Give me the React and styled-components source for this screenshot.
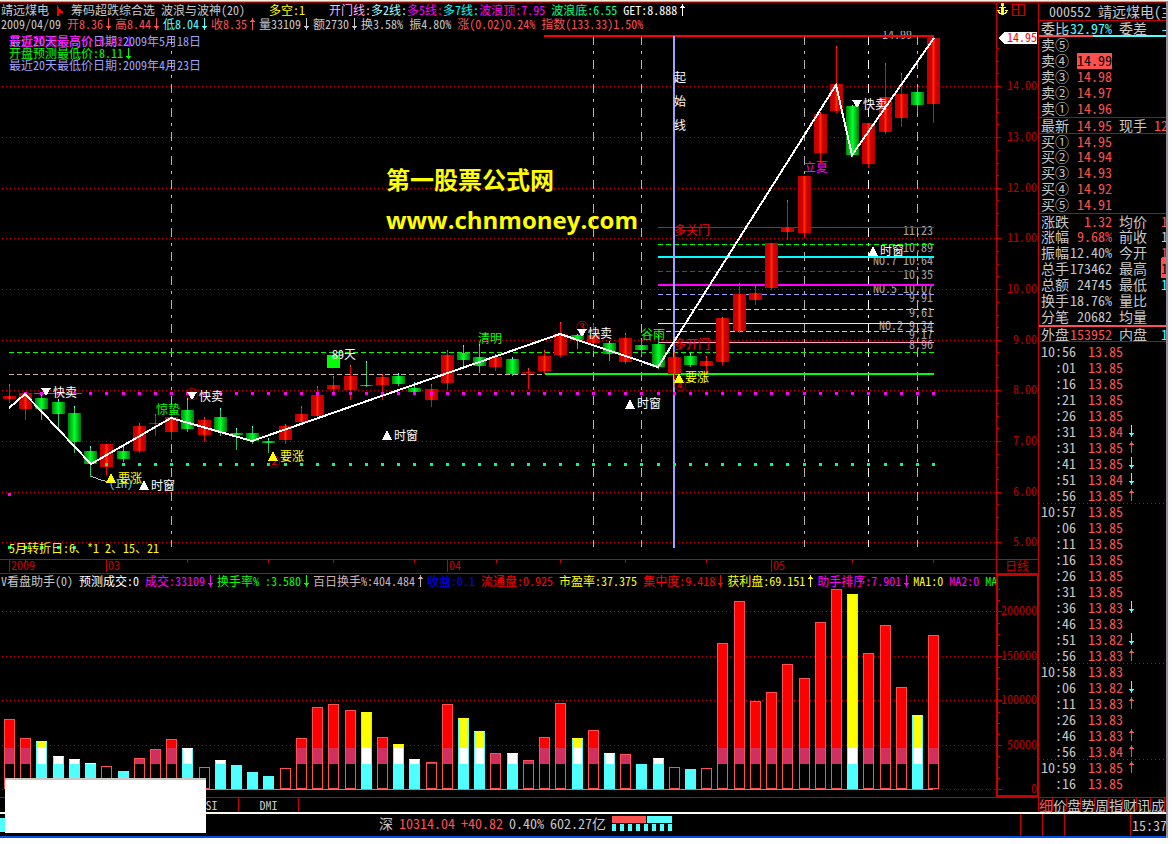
import React from "react";
import styled, { createGlobalStyle, css } from "styled-components";

const GlobalStyle = createGlobalStyle`
  * {
    box-sizing: border-box;
  }
  body {
    margin: 0;
    background: #fdfdff;
    color: #c8c8c8;
    font-family: "Noto Sans CJK SC", "Liberation Mono", monospace;
    font-size: 12px;
    line-height: 14px;
    /* half-width latin, so that two digits fill one chinese cell */
    font-feature-settings: "hwid" 1;
  }
`;

const RED = "#ff5050";
const CYAN = "#50ffff";
const LINE = "#c80000";

const titleItems = [
  ["波浪与波神(20)    ", "#c8c8c8"],
  ["多空:1    ", "#ffff00"],
  ["开门线:", "#ffb0ff"],
  ["多2线:", "#a0ffff"],
  ["多5线:", "#ff00ff"],
  ["多7线:", "#00ffff"],
  ["波浪顶:7.95 ", "#ff00ff"],
  ["波浪底:6.55 ", "#00ff80"],
  ["GET:8.888", "#ffffff", "up"],
];

const dayItems = [
  ["2009/04/09 ", "#c8c8c8"],
  ["开8.36", RED, "down"],
  ["高8.44", RED, "down"],
  ["低8.04", CYAN, "down"],
  ["收8.35", RED, "up"],
  ["量33109", "#c8c8c8", "down"],
  ["额2730", "#c8c8c8", "down"],
  ["换3.58% ", "#c8c8c8"],
  ["振4.80% ", "#c8c8c8"],
  ["涨(0.02)0.24% ", RED],
  ["指数(133.33)1.50%", RED],
];

const volumeItems = [
  ["V看盘助手(0) ", "#c8c8c8"],
  ["预测成交:0 ", "#ffffff"],
  ["成交:33109", "#ff00ff", "down"],
  ["换手率% :3.580", "#00ff00", "down"],
  ["百日换手%:404.484", "#d0b0b8", "up"],
  ["收益:0.1 ", "#0000ff"],
  ["流通盘:0.925 ", "#ff0000"],
  ["市盈率:37.375 ", "#ffff00"],
  ["集中度:9.418", "#ff0000", "down"],
  ["获利盘:69.151", "#ffff00", "up"],
  ["助手排序:7.901", "#ff00ff", "down"],
  ["MA1:0 ", "#ffff00"],
  ["MA2:0 ", "#ff00ff"],
  ["MA", "#00ff00"],
];

// [direction, high, top, bottom, low]
const candles = [
  ["r", 384, 396, 399, 402],
  ["r", 392, 393, 409, 419],
  ["g", 394, 398, 409, 419],
  ["g", 399, 402, 414, 427],
  ["g", 406, 413, 442, 452],
  ["g", 446, 451, 464, 476],
  ["r", 444, 444, 467, 474],
  ["g", 446, 451, 459, 461],
  ["r", 423, 426, 451, 452],
  ["r", 414, 423, 424, 435],
  ["r", 411, 417, 432, 439],
  ["g", 398, 410, 429, 431],
  ["r", 417, 420, 435, 441],
  ["g", 408, 417, 432, 435],
  ["g", 428, 433, 435, 449],
  ["g", 426, 433, 441, 443],
  ["g", 438, 441, 443, 452],
  ["r", 424, 426, 440, 443],
  ["r", 406, 414, 422, 424],
  ["r", 386, 395, 416, 418],
  ["r", 376, 385, 389, 395],
  ["r", 365, 376, 390, 399],
  ["g", 361, 385, 386, 386],
  ["r", 374, 377, 385, 399],
  ["g", 373, 376, 384, 385],
  ["g", 382, 388, 392, 393],
  ["r", 384, 389, 400, 406],
  ["r", 350, 355, 383, 389],
  ["g", 345, 353, 360, 368],
  ["g", 344, 357, 366, 372],
  ["r", 354, 357, 367, 370],
  ["g", 357, 359, 374, 375],
  ["r", 368, 372, 373, 388],
  ["r", 350, 356, 371, 373],
  ["r", 322, 334, 355, 356],
  ["g", 334, 335, 340, 348],
  ["r", 323, 335, 343, 350],
  ["g", 341, 343, 354, 360],
  ["r", 333, 338, 362, 363],
  ["g", 338, 345, 350, 354],
  ["g", 335, 344, 367, 368],
  ["r", 352, 357, 374, 378],
  ["g", 353, 356, 365, 366],
  ["r", 356, 361, 366, 372],
  ["r", 317, 318, 362, 364],
  ["r", 283, 294, 331, 332],
  ["r", 286, 293, 300, 304],
  ["r", 243, 243, 288, 289],
  ["r", 200, 227, 232, 239],
  ["r", 176, 176, 233, 237],
  ["r", 112, 114, 153, 162],
  ["r", 46, 84, 111, 112],
  ["g", 105, 106, 155, 156],
  ["r", 123, 123, 164, 167],
  ["r", 63, 97, 132, 133],
  ["r", 73, 94, 118, 126],
  ["g", 85, 92, 105, 111],
  ["r", 37, 38, 104, 122],
];

const volumes = [
  ["r", 719], ["r", 738], ["c", 741], ["c", 756], ["c", 759], ["c", 763],
  ["r", 766], ["c", 771], ["r", 758], ["r", 749], ["r", 739], ["c", 748],
  ["r", 767], ["c", 760], ["c", 765], ["c", 772], ["c", 776], ["r", 768],
  ["r", 738], ["r", 707], ["r", 704], ["r", 710], ["c", 712], ["r", 737],
  ["c", 744], ["c", 759], ["r", 762], ["r", 704], ["c", 718], ["c", 731],
  ["r", 753], ["c", 753], ["r", 760], ["r", 737], ["r", 703], ["c", 738],
  ["r", 730], ["c", 753], ["r", 754], ["c", 764], ["c", 758], ["r", 767],
  ["c", 769], ["r", 768], ["r", 643], ["r", 601], ["r", 701], ["r", 692],
  ["r", 664], ["r", 678], ["r", 622], ["r", 589], ["c", 594], ["r", 653],
  ["r", 625], ["r", 687], ["c", 715], ["r", 635],
];

const priceLevels = [
  ["14.00", 86], ["13.00", 137], ["12.00", 188], ["11.00", 238], ["10.00", 289],
  ["9.00", 340], ["8.00", 390], ["7.00", 441], ["6.00", 492], ["5.00", 542],
];

const volumeLevels = [
  ["200000", 611], ["150000", 656], ["100000", 700], ["50000", 745], ["0", 789],
];

// [y, colour, thickness, dash]
const fibLines = [
  [227, "#ff0000", 1],
  [244, "#00ff00", 1, "5 3"],
  [256, "#00ffff", 2],
  [271, "#ff0000", 1, "5 3"],
  [284, "#ff00ff", 2],
  [294, "#a0a0ff", 1, "5 3"],
  [309, "#a0ffa0", 1, "5 3"],
  [323, "#a0ffff", 1],
  [331, "#ffc0a0", 1, "5 3"],
  [342, "#ffa0d0", 1],
];

const fibLabels = [
  ["14.99", 35, 912], ["11.23", 231], ["10.89", 248], ["NO.7 10.64", 261],
  ["10.35", 275], ["NO.5 10.07", 289], ["9.91", 298], ["9.61", 313],
  ["NO.2 9.34", 326], ["9.17", 335], ["8.96", 345],
];

// [text, x, centre y, colour]
const notes = [
  ["最近20天最高价日期:2009年5月18日", 9, 42, "#a0a0ff"],
  ["开盘预测最高价:8.62↓", 9, 42, "#ff00ff"],
  ["开盘预测最低价:8.11", 9, 54, "#00ff00"],
  ["最近20天最低价日期:2009年4月23日", 9, 66, "#a0a0ff"],
  ["起", 674, 78, "#ffffff"],
  ["始", 674, 102, "#ffffff"],
  ["线", 674, 126, "#ffffff"],
  ["立夏", 804, 168, "#ff00ff"],
  ["多关门", 674, 231, "#ff0000"],
  ["多开门", 674, 345, "#ff0000"],
  ["①", 186, 395, "#ff0000"],
  ["②", 268, 463, "#ff0000"],
  ["③", 576, 328, "#ff0000"],
  ["④", 674, 386, "#ff0000"],
  ["快卖", 863, 105, "#ffffff"],
  ["快卖", 53, 393, "#ffffff"],
  ["快卖", 199, 397, "#ffffff"],
  ["快卖", 588, 334, "#ffffff"],
  ["惊蛰", 156, 410, "#00ff00"],
  ["清明", 478, 339, "#00ff00"],
  ["谷雨", 641, 335, "#00ff00"],
  ["(1H)", 109, 484, "#60d0e0"],
  ["要涨", 118, 479, "#ffff00"],
  ["要涨", 280, 457, "#ffff00"],
  ["要涨", 685, 378, "#ffff00"],
  ["时窗", 151, 486, "#ffffff"],
  ["时窗", 394, 436, "#ffffff"],
  ["时窗", 637, 404, "#ffffff"],
  ["时窗", 880, 251, "#ffffff"],
  ["89天", 332, 355, "#ffffff"],
  ["5月转折日:6、*1 2、15、21", 9, 549, "#ffff00"],
];

// [kind, centre x, top y, colour]
const marks = [
  ["down", 857, 100, "#ffffff"],
  ["down", 46, 388, "#ffffff"],
  ["down", 192, 392, "#ffffff"],
  ["down", 582, 329, "#ffffff"],
  ["up", 111, 473, "#ffff00"],
  ["up", 273, 451, "#ffff00"],
  ["up", 679, 373, "#ffff00"],
  ["up", 144, 480, "#ffffff"],
  ["up", 387, 430, "#ffffff"],
  ["up", 630, 399, "#ffffff"],
  ["up", 873, 246, "#ffffff"],
];

const orders = [
  ["卖⑤", ""], ["卖④", "14.99", "hot"], ["卖③", "14.98"], ["卖②", "14.97"], ["卖①", "14.96"],
];
const bids = [
  ["买①", "14.95"], ["买②", "14.94"], ["买③", "14.93"], ["买④", "14.92"], ["买⑤", "14.91"],
];
const stats = [
  ["涨跌", "1.32", RED, "均价", "1", RED],
  ["涨幅", "9.68%", RED, "前收", "1"],
  ["振幅", "12.40%", "", "今开", "1", RED],
  ["总手", "173462", "", "最高", "1", "hot"],
  ["总额", "24745", "", "最低", "1", CYAN],
  ["换手", "18.76%", "", "量比", ""],
  ["分笔", "20682", "", "均量", ""],
];

const ticks = [
  ["10:56", "13.85"], [":01", "13.85"], [":16", "13.85"], [":21", "13.85"],
  [":26", "13.85"], [":31", "13.84", "down"], [":31", "13.85", "up"],
  [":41", "13.85", "down"], [":51", "13.84", "down"], [":56", "13.85", "up"],
  ["10:57", "13.85"], [":06", "13.85"], [":11", "13.85"], [":16", "13.85"],
  [":26", "13.85"], [":31", "13.85"], [":36", "13.83", "down"], [":46", "13.83"],
  [":51", "13.82", "down"], [":56", "13.83", "up"], ["10:58", "13.83"],
  [":06", "13.82", "down"], [":11", "13.83", "up"], [":26", "13.83"],
  [":46", "13.83", "up"], [":56", "13.84", "up"], ["10:59", "13.85", "up"],
  [":16", "13.85"],
];

const candleX = (i) => Math.round(9 + i * 16.215);

const Arrow = ({ dir, color, size = 12 }) => (
  <ArrowIcon width={size} height="12" viewBox={`${size === 12 ? -3 : 0} 0 ${size} 12`}>
    <g transform={dir === "up" ? "matrix(1 0 0 -1 0 12)" : undefined} fill={color}>
      <rect x="2" y="0" width="1" height="12" />
      <rect x="0" y="8" width="5" height="1" />
      <rect x="1" y="9" width="3" height="1" />
    </g>
  </ArrowIcon>
);

const Items = ({ items }) =>
  items.map(([text, color, dir]) => (
    <Item key={text} $color={color}>
      {text}
      {dir && <Arrow dir={dir} color={color} />}
    </Item>
  ));

const Candle = ({ index, data }) => {
  const [dir, high, top, bottom, low] = data;
  const x = candleX(index);
  const red = dir === "r";
  return (
    <g>
      <rect x={x} y={high} width="1" height={low - high + 1} fill={red ? "#ff0000" : "#30c060"} />
      <rect x={x} y={high} width="1" height="2" fill={red ? "#ff4040" : "#50ffff"} />
      <rect
        x={x - 6}
        y={top}
        width="13"
        height={Math.max(1, bottom - top)}
        fill={red ? "url(#redBody)" : "url(#greenBody)"}
      />
    </g>
  );
};

const PriceChart = () => (
  <Chart viewBox="0 31 1038 543" role="img" aria-label="K线图">
    <defs>
      <linearGradient id="redBody">
        <stop offset="0" stopColor="#c00000" />
        <stop offset="0.35" stopColor="#d80000" />
        <stop offset="0.5" stopColor="#ff3000" />
        <stop offset="0.65" stopColor="#d80000" />
        <stop offset="1" stopColor="#b80000" />
      </linearGradient>
      <linearGradient id="greenBody">
        <stop offset="0" stopColor="#008800" />
        <stop offset="0.5" stopColor="#00ff30" />
        <stop offset="1" stopColor="#007800" />
      </linearGradient>
    </defs>

    {priceLevels.map(([label, y]) => (
      <g key={label}>
        <line x1="2" x2="996" y1={y + 0.5} y2={y + 0.5} stroke={LINE} strokeDasharray="1 3" />
        <rect x="997" y={y} width="4" height="1" fill={LINE} />
        <rect x="997" y={y - 38} width="2" height="1" fill={LINE} />
        <rect x="997" y={y - 25} width="2" height="1" fill={LINE} />
        <rect x="997" y={y - 13} width="2" height="1" fill={LINE} />
        <Label x="1037" y={y + 4} fill="#b80000" textAnchor="end">
          {label}
        </Label>
      </g>
    ))}

    {[171, 593, 641, 804, 868, 917].map((x) => (
      <line
        key={x}
        x1={x + 0.5}
        x2={x + 0.5}
        y1="36"
        y2="547"
        stroke={x === 868 ? "#ffffff" : "#b4b4b4"}
        strokeDasharray="9 6 3 6"
      />
    ))}

    {fibLabels.map(([label, y, x = 933]) => (
      <Label key={label} x={x} y={y + 4} fill="#a8a8a8" textAnchor="end">
        {label}
      </Label>
    ))}
    <rect x="544" y="35" width="390" height="2" fill="#ff0000" />
    {fibLines.map(([y, color, size, dash]) => (
      <line
        key={y}
        x1="658"
        x2="934"
        y1={y + size / 2}
        y2={y + size / 2}
        stroke={color}
        strokeWidth={size}
        strokeDasharray={dash}
      />
    ))}
    <line x1="9" x2="934" y1="352.5" y2="352.5" stroke="#00ff00" strokeDasharray="5 3" />
    <line x1="9" x2="545" y1="374.5" y2="374.5" stroke="#d8b0b0" strokeDasharray="5 3" />
    <rect x="545" y="373" width="389" height="2" fill="#00ff00" />
    <rect x="34" y="393" width="48" height="1" fill="#ff00ff" />
    <rect x="673" y="36" width="2" height="512" fill="#a0a0ff" />

    {candles.map((data, i) => (
      <Candle key={i} index={i} data={data} />
    ))}

    {candles.map((_, i) => (
      <g key={i}>
        {i > 0 && <rect x={candleX(i) - 1} y="392" width="3" height="3" fill="#ff00ff" />}
        {i > 5 && <rect x={candleX(i) - 1} y="463" width="3" height="3" fill="#00ff80" />}
        {i < 5 && <rect x={candleX(i) - 1} y="546" width="3" height="3" fill="#00ff80" />}
      </g>
    ))}
    <rect x="8" y="493" width="3" height="3" fill="#ff00ff" />
    <rect x="327" y="355" width="13" height="13" fill="#00ff00" />
    <polyline points="91,476 98,479 108,482" fill="none" stroke="#c0c0c0" />
    <polyline
      points="9,408 25,394 91,464 171,418 252,441 560,334 658,367 836,85 852,155 934,38"
      fill="none"
      stroke="#ffffff"
      strokeWidth="2"
    />

    {notes.map(([text, x, y, color]) => (
      <Label key={text + x + y} x={x} y={y + 4} fill={color}>
        {text}
      </Label>
    ))}
    <g fill="#00ff00">
      <rect x="128" y="48" width="1" height="11" />
      <rect x="126" y="56" width="5" height="1" />
      <rect x="127" y="57" width="3" height="1" />
    </g>
    {marks.map(([kind, x, y, color]) => (
      <polygon
        key={`${x}-${y}`}
        points={
          kind === "up"
            ? `${x},${y} ${x + 5},${y + 10} ${x - 5},${y + 10}`
            : `${x - 5},${y} ${x + 5},${y} ${x},${y + 8}`
        }
        fill={color}
      />
    ))}

    <Watermark x="386" y="189">
      第一股票公式网
    </Watermark>
    <Watermark x="386" y="229" $latin>
      www.chnmoney.com
    </Watermark>

    <polygon points="998,38 1004,32 1037,32 1037,44 1004,44" fill="#ffffff" />
    <Label x="1037" y="42" fill="#ff0000" textAnchor="end">
      14.95
    </Label>

    <g fill={LINE}>
      <rect x="0" y="559" width="1038" height="1" />
      <rect x="0" y="573" width="1038" height="1" />
      <rect x="996" y="31" width="1" height="543" />
      {[9, 106, 447, 771].map((x) => (
        <rect key={x} x={x} y="560" width="1" height="12" />
      ))}
      {[25, 187, 268, 333, 414, 496, 560, 625, 706, 852, 933].map((x) => (
        <rect key={x} x={x} y="560" width="1" height="3" />
      ))}
    </g>
    {[["2009", 11], ["03", 108], ["04", 449], ["05", 773]].map(([label, x]) => (
      <Label key={label} x={x} y="570" fill={LINE}>
        {label}
      </Label>
    ))}
    <Label x="1005" y="571" fill={LINE}>
      日线
    </Label>
  </Chart>
);

const VolumeBar = ({ index, data }) => {
  const [kind, top] = data;
  const x = candleX(index) - 5;
  const red = kind === "r";
  return (
    <g>
      <rect x={x} y={top} width="11" height={789 - top} fill={red ? "#000000" : CYAN} />
      {top < 764 && (
        <rect x={x} y={top} width="11" height={764 - top} fill={red ? "#d03060" : "#ffffff"} />
      )}
      {top < 748 && (
        <rect x={x} y={top} width="11" height={748 - top} fill={red ? "#ff0000" : "#ffff00"} />
      )}
      <rect
        x={x + 0.5}
        y={top + 0.5}
        width="10"
        height={788 - top}
        fill="none"
        stroke={red ? RED : CYAN}
      />
      {!red && top < 764 && (
        <rect x={x} y={top} width="11" height="1" fill={top < 748 ? "#ffff00" : "#ffffff"} />
      )}
    </g>
  );
};

const VolumeChart = () => (
  <Chart viewBox="0 588 1038 209" role="img" aria-label="成交量">
    {volumeLevels.map(([label, y]) => (
      <g key={label}>
        <line x1="2" x2="996" y1={y + 0.5} y2={y + 0.5} stroke={LINE} strokeDasharray="1 3" />
        <rect x="997" y={y} width="5" height="1" fill={LINE} />
        {[11, 22, 33].map((d) => (
          <rect key={d} x="998" y={y - d} width="2" height="1" fill={LINE} />
        ))}
        <Label x="1037" y={y + 4} fill="#b80000" textAnchor="end">
          {label}
        </Label>
      </g>
    ))}
    <rect x="9" y="789" width="924" height="1" fill="#00ff00" />
    {volumes.map((data, i) => (
      <VolumeBar key={i} index={i} data={data} />
    ))}
    <rect x="996" y="588" width="2" height="209" fill={LINE} />
    <rect x="1037" y="588" width="1" height="209" fill={LINE} />
    <rect x="996" y="795" width="42" height="2" fill={LINE} />
  </Chart>
);

const QuoteRow = ({ label, value, color, label2, value2, color2, line, near }) => (
  <QuoteLine $line={line}>
    <QuoteName>{label}</QuoteName>
    <QuoteValue>
      <Price $color={color}>{value}</Price>
    </QuoteValue>
    <QuoteName as="td">{label2}</QuoteName>
    <QuoteTail $near={near}>
      <Price $color={color2}>{value2}</Price>
    </QuoteTail>
  </QuoteLine>
);

const App = () => {
  return (
    <Page>
      <GlobalStyle />
      <TopEdge />
      <Screen>
        <Charts>
          <Header>
            <HeaderLines>
              <InfoLine>
                <Item>靖远煤电</Item>
                <Flag width="22" height="12" viewBox="0 0 22 12">
                  <path d="M8 1v11h2V9h4V7h-2V5h-2V3H9V1z" fill="#ff0000" />
                </Flag>
                <Item>筹码超跌综合选 </Item>
                <Items items={titleItems} />
              </InfoLine>
              <InfoLine>
                <Items items={dayItems} />
              </InfoLine>
            </HeaderLines>
            <AxisHead>
              <svg width="28" height="13" viewBox="0 0 28 13" shapeRendering="crispEdges">
                <path
                  d="M4 0h3v3H4zM5 3h1v1h3v1H7v5h1V9h1V8h-1V7h3v1h-1v2H9v1H7v1H4v-1H2v-1H1V8H0V7h3v1H2v1h1v1h1V5H2V4h3z"
                  fill="#ffff00"
                />
                <path d="M15 1h12v11H15zM15 6h6M21 1v11" stroke={LINE} fill="none" />
              </svg>
            </AxisHead>
          </Header>
          <PriceChart />
          <Header>
            <HeaderLines>
              <InfoLine>
                <Items items={volumeItems} />
              </InfoLine>
            </HeaderLines>
            <AxisHead $frame />
          </Header>
          <VolumeChart />
          <IndicatorTabs>
            <IndicatorTab>RSI</IndicatorTab>
            <IndicatorTab>DMI</IndicatorTab>
          </IndicatorTabs>
        </Charts>

        <Side>
          <StockTitle>000552 靖远煤电(主)</StockTitle>
          <Quotes>
            <tbody>
              <QuoteRow
                label="委比"
                value="-32.97%"
                color={CYAN}
                label2="委差"
                value2="-"
                color2={CYAN}
              />
            </tbody>
          </Quotes>
          <RatioBar>
            <RatioPart $color={RED} />
            <RatioPart $color={CYAN} />
          </RatioBar>
          <Quotes>
            <tbody>
              {orders.map(([label, value, hot]) => (
                <QuoteRow key={label} label={label} value={value} color={hot || RED} />
              ))}
              <QuoteRow
                label="最新"
                value="14.95"
                color={RED}
                label2="现手"
                value2="12"
                color2={RED}
                line="1px"
                near
              />
              {bids.map(([label, value], i) => (
                <QuoteRow
                  key={label}
                  label={label}
                  value={value}
                  color={RED}
                  line={i === 0 && "1px"}
                />
              ))}
              {stats.map(([label, value, color, label2, value2, color2], i) => (
                <QuoteRow
                  key={label}
                  label={label}
                  value={value}
                  color={color}
                  label2={label2}
                  value2={value2}
                  color2={color2}
                  line={i === 0 && "1px"}
                />
              ))}
              <QuoteRow
                label="外盘"
                value="153952"
                color={RED}
                label2="内盘"
                value2="1"
                color2={CYAN}
                line="2px"
              />
            </tbody>
          </Quotes>
          <Ticks>
            <tbody>
              {ticks.map(([time, price, dir], i) => (
                <TickRow key={i} $dotted={i > 0 && time.length === 5}>
                  <TickTime>{time}</TickTime>
                  <TickPrice>{price}</TickPrice>
                  <TickArrow>
                    {dir && <Arrow size={6} dir={dir} color={dir === "up" ? RED : CYAN} />}
                  </TickArrow>
                </TickRow>
              ))}
            </tbody>
          </Ticks>
          <SideTabs>
            {"细价盘势周指财讯成".split("").map((name, i) => (
              <SideTab key={name} $active={i === 0}>
                {name}
              </SideTab>
            ))}
          </SideTabs>
        </Side>
      </Screen>

      <StatusBar>
        <Level />
        <Index>
          <Item>深</Item>
          <Item $color={RED}>10314.04</Item>
          <Item $color={RED}>+40.82</Item>
          <Item>0.40%</Item>
          <Item>602.27亿</Item>
          <svg width="60" height="16" viewBox="0 0 60 16">
            <rect x="0" y="1" width="34" height="7" fill={RED} />
            <rect x="35" y="1" width="25" height="7" fill={CYAN} />
            {[0, 8, 16, 24, 32, 40, 48, 56].map((x) => (
              <rect key={x} x={x} y="9" width="4" height="7" fill={CYAN} />
            ))}
          </svg>
        </Index>
        <StatusCells>
          <StatusCell />
          <StatusCell />
          <StatusCell />
          <StatusCell>15:37:</StatusCell>
        </StatusCells>
      </StatusBar>
      <Cover />
    </Page>
  );
};

const Page = styled.div`
  position: relative;
  margin-right: 6px;
  background: #000000;
  border-bottom: 2px solid #0050e8;
  box-shadow: 1px 2px 0 1px #989098;
`;

const TopEdge = styled.div`
  height: 3px;
  background: linear-gradient(#f0eedc 0 1px, #a8a09c 1px 2px, #900000 2px);
`;

const Screen = styled.div`
  display: grid;
  grid-template-columns: minmax(0, 1fr) 128px;
`;

const Charts = styled.main`
  display: flex;
  flex-direction: column;
`;

const Header = styled.header`
  display: flex;
`;

const HeaderLines = styled.div`
  flex: 1;
  min-width: 0;
  overflow-x: clip;
`;

const InfoLine = styled.div`
  display: flex;
  align-items: center;
  height: 14px;
  padding-left: 1px;
`;

const Item = styled.span`
  display: flex;
  align-items: center;
  flex-shrink: 0;
  color: ${(props) => props.$color || "#c8c8c8"};
  white-space: pre;
`;

const ArrowIcon = styled.svg`
  flex-shrink: 0;
`;

const Flag = styled.svg`
  flex-shrink: 0;
`;

const AxisHead = styled.div`
  width: 42px;
  border-left: 1px solid ${LINE};
  ${(props) =>
    props.$frame &&
    css`
      border: 2px solid ${LINE};
      border-right-width: 1px;
      border-bottom: 0;
    `}
`;

const Chart = styled.svg`
  display: block;
  width: 100%;
  height: auto;
  shape-rendering: crispEdges;
`;

const Label = styled.text`
  font-size: 12px;
  white-space: pre;
`;

const Watermark = styled.text`
  font-size: 24px;
  font-family: ${(props) =>
    props.$latin ? '"Open Sans", sans-serif' : '"Noto Sans CJK SC", sans-serif'};
  font-weight: bold;
  fill: #ffff00;
`;

const IndicatorTabs = styled.nav`
  display: flex;
  height: 15px;
  padding-left: 179px;
  border-top: 1px solid ${LINE};
`;

const IndicatorTab = styled.button`
  width: 60px;
  padding: 0;
  border: 0;
  border-right: 1px solid ${LINE};
  background: none;
  color: #c8c8c8;
  font: inherit;
  font-feature-settings: inherit;
`;

const Side = styled.aside`
  display: flex;
  flex-direction: column;
  border-left: 1px solid ${LINE};
  font-size: 14px;
  line-height: 16px;
  overflow-x: clip;
`;

const StockTitle = styled.div`
  height: 18px;
  padding-left: 10px;
  border-bottom: 1px solid ${LINE};
  white-space: nowrap;
`;

const Quotes = styled.table`
  display: block;
  tbody {
    display: block;
  }
`;

const QuoteLine = styled.tr`
  display: grid;
  grid-template-columns: 28px 43px 28px 1fr;
  height: 16px;
  padding-left: 2px;
  line-height: 14px;
  border-top: ${(props) =>
    props.$line ? `${props.$line} solid ${props.$line === "2px" ? RED : LINE}` : "0"};
  white-space: pre;
  & > :nth-child(3) {
    margin-left: 7px;
  }
`;

const QuoteName = styled.th`
  padding: 0;
  font-weight: normal;
  text-align: left;
`;

const QuoteValue = styled.td`
  display: flex;
  justify-content: flex-end;
  padding: 0;
`;

const QuoteTail = styled.td`
  padding: 0 0 0 ${(props) => (props.$near ? "14px" : "21px")};
`;

const Price = styled.span`
  color: ${(props) => (props.$color === "hot" ? "#000000" : props.$color || "#c8c8c8")};
  background: ${(props) => (props.$color === "hot" ? RED : "none")};
`;

const RatioBar = styled.div`
  display: flex;
  height: 2px;
  margin-top: -2px;
`;

const RatioPart = styled.div`
  flex: ${(props) => (props.$color === RED ? 54 : 73)};
  background: ${(props) => props.$color};
`;

const Ticks = styled.table`
  display: block;
  flex: 1;
  padding-top: 1px;
  border-top: 1px solid ${LINE};
  tbody {
    display: block;
  }
`;

const TickRow = styled.tr`
  display: grid;
  grid-template-columns: 35px 35px 12px;
  column-gap: 12px;
  height: 16px;
  padding-left: 2px;
  ${(props) =>
    props.$dotted &&
    css`
      background: repeating-linear-gradient(90deg, ${LINE} 0 1px, transparent 1px 4px) 0 0 / 100%
        1px no-repeat;
    `}
`;

const TickTime = styled.td`
  padding: 0;
  text-align: right;
`;

const TickPrice = styled.td`
  padding: 0;
  color: ${RED};
`;

const TickArrow = styled.td`
  display: flex;
  align-items: center;
  margin-left: -6px;
  padding: 0;
`;

const SideTabs = styled.nav`
  display: flex;
  height: 15px;
  border-top: 1px solid ${LINE};
`;

const SideTab = styled.button`
  flex: 0 0 14px;
  min-width: 0;
  padding: 0;
  border: 0;
  border-radius: 0 0 4px 4px;
  box-shadow: inset -1px -1px 0 ${LINE};
  background: none;
  color: ${(props) => (props.$active ? RED : "#c8c8c8")};
  font: inherit;
  line-height: 14px;
`;

const StatusBar = styled.footer`
  display: flex;
  align-items: center;
  height: 24px;
  border-top: 2px solid #fffff0;
  font-size: 14px;
`;

const Level = styled.div`
  width: 379px;
  height: 14px;
  background: linear-gradient(90deg, ${CYAN} 5px, transparent 5px);
`;

const Index = styled.div`
  display: flex;
  flex: 1;
  align-items: center;
  column-gap: 6px;
  padding-bottom: 4px;
`;

const StatusCells = styled.div`
  display: grid;
  grid-template-columns: 22px 22px 66px 36px;
  align-self: stretch;
  overflow-x: clip;
`;

const StatusCell = styled.div`
  border-left: 1px solid ${LINE};
  padding-left: 1px;
  line-height: 22px;
`;

/* blank patch over the bottom left corner */
const Cover = styled.div`
  position: absolute;
  left: 5px;
  bottom: 3px;
  width: 201px;
  height: 55px;
  border-top: 2px solid #c8c8c0;
  background: #ffffff;
`;

export default App;
